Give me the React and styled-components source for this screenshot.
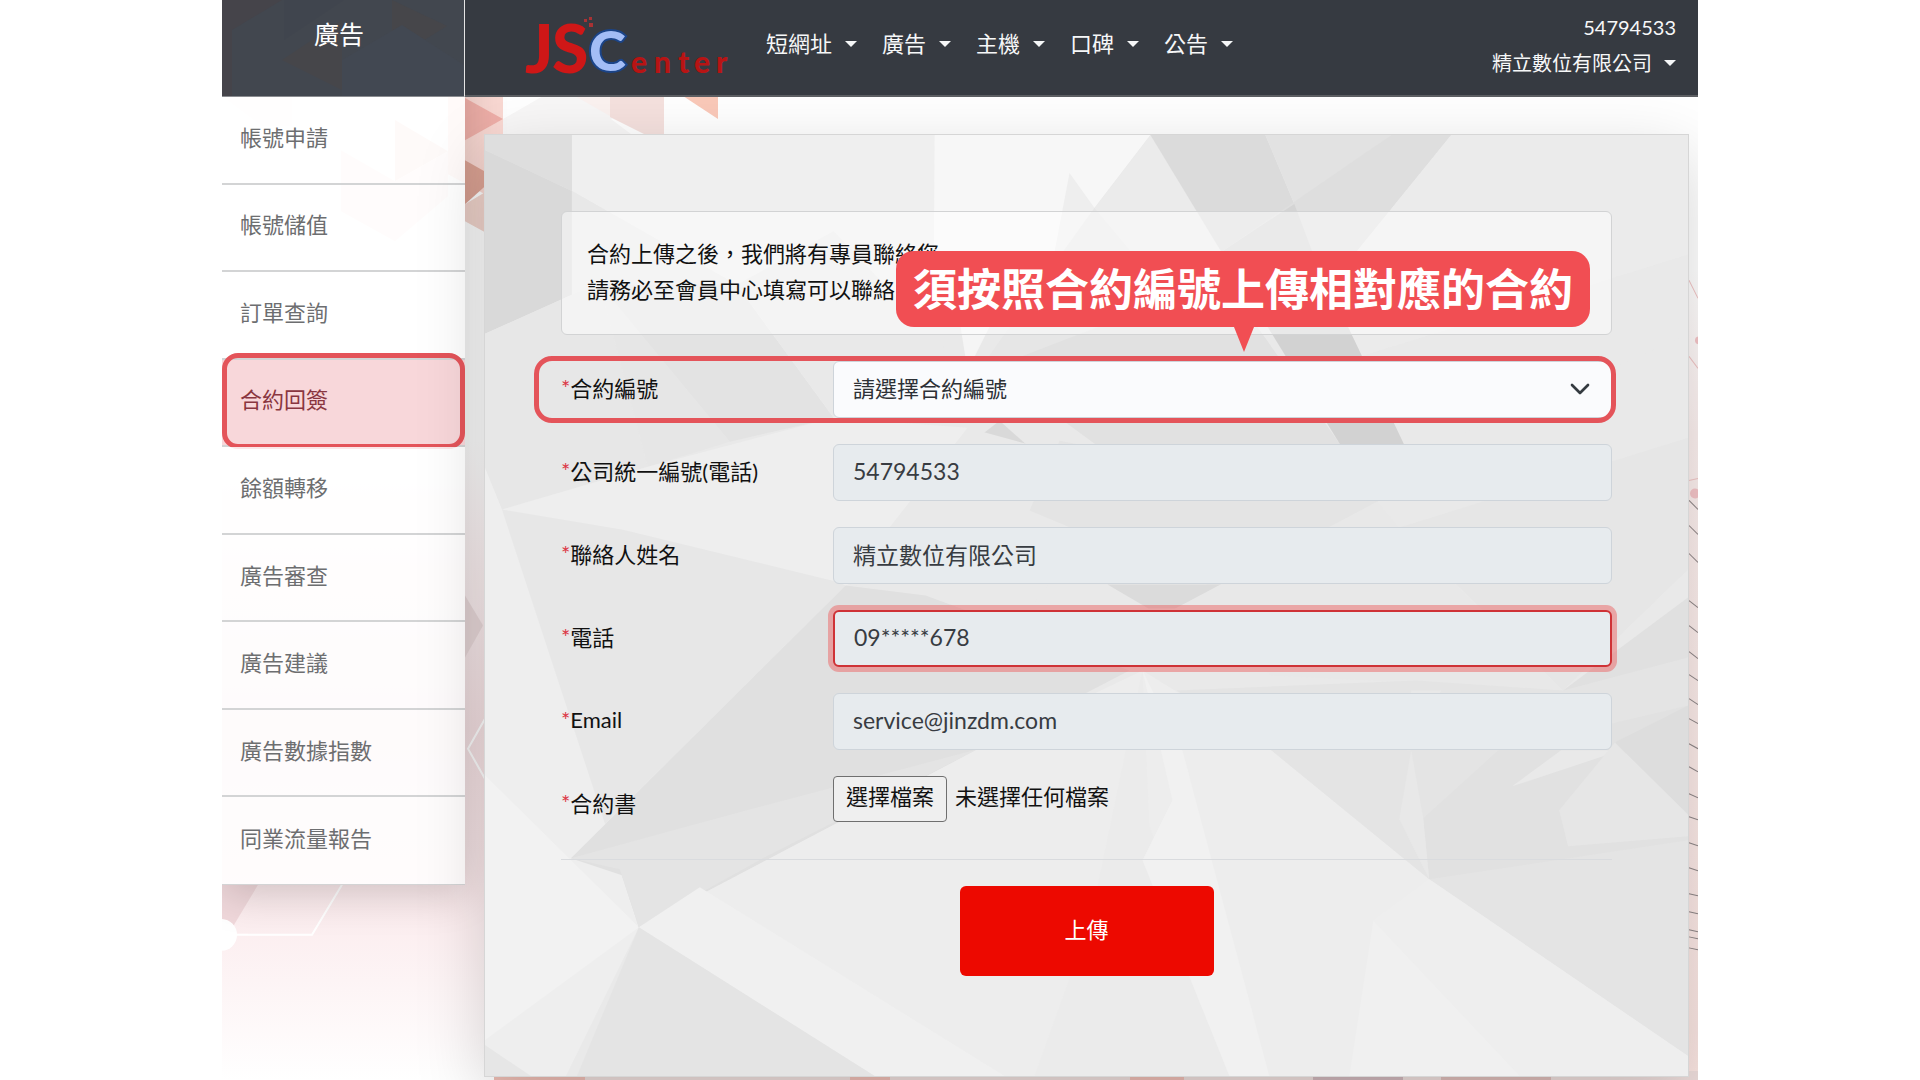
import { useRef, useState } from "react";
import styled, { createGlobalStyle } from "styled-components";
import { ChevronDown } from "lucide-react";

const sideMenu = [
  "帳號申請",
  "帳號儲值",
  "訂單查詢",
  "合約回簽",
  "餘額轉移",
  "廣告審查",
  "廣告建議",
  "廣告數據指數",
  "同業流量報告",
];

const topMenu = ["短網址", "廣告", "主機", "口碑", "公告"];

const fields = [
  { id: "taxId", label: "公司統一編號(電話)", value: "54794533" },
  { id: "contact", label: "聯絡人姓名", value: "精立數位有限公司" },
  { id: "phone", label: "電話", value: "09*****678", invalid: true },
  { id: "email", label: "Email", value: "service@jinzdm.com" },
];

// short strokes along the right edge of the backdrop: [y, drop]
const ticks = [
  [500, 9], [525, 9], [553, 9], [600, 7], [625, 7], [651, 7], [674, 6],
  [698, 6], [718, 5], [743, 5], [766, 5], [793, 4], [816, 3], [842, 3],
  [867, 3], [893, 2], [911, 2], [929, 2], [936, 2], [947, 2],
];

function Logo() {
  return (
    <LogoSvg viewBox="520 0 216 96" role="img" aria-label="JSCenter">
      <g fill="#cf1717" fontWeight="900">
        <text x="525" y="73" fontSize="66">J</text>
        <text x="552" y="73" fontSize="66">S</text>
        <text x="631 654 678 694 716" y="73" fontSize="30" fill="#b81414">
          enter
        </text>
      </g>
      <text
        x="589"
        y="71"
        fontSize="56"
        fontWeight="900"
        fill="#a3bdf6"
        stroke="#1b4488"
        strokeWidth="4"
        paintOrder="stroke"
      >
        C
      </text>
      <g fill="#a83234">
        <rect x="584" y="19" width="3" height="3" />
        <rect x="589" y="17" width="3" height="3" />
        <rect x="589" y="23" width="4" height="4" />
      </g>
    </LogoSvg>
  );
}

function Backdrop() {
  return (
    <Art viewBox="222 0 1476 1080" preserveAspectRatio="none" aria-hidden="true">
      <defs>
        <linearGradient id="blush" x1="0" y1="0" x2="0" y2="1">
          <stop offset="0" stopColor="#f6dde0" stopOpacity="0" />
          <stop offset="0.45" stopColor="#f5e1e3" />
          <stop offset="0.7" stopColor="#fbeaec" />
          <stop offset="1" stopColor="#ffffff" />
        </linearGradient>
        <linearGradient id="edge" x1="0" y1="0" x2="0" y2="1">
          <stop offset="0" stopColor="#fbefee" stopOpacity="0" />
          <stop offset="0.2" stopColor="#fbefee" />
          <stop offset="1" stopColor="#f9e4e0" />
        </linearGradient>
      </defs>
      <rect x="222" y="440" width="290" height="640" fill="url(#blush)" />
      <path d="M395 120l53 31-53 30z" fill="#f9d9d3" />
      <path d="M341 150l54 31 53-30v45l-53 45-54-30z" fill="#fceae6" />
      <path d="M222 96h70v30h-30z" fill="#fdf4f4" />
      <path d="M448 96h55v38h-18v60l-37-20z" fill="#fad9d3" />
      <path d="M465 98l38 21-38 21z" fill="#f0b0a9" />
      <path d="M465 160l30 17-30 27z" fill="#dfa596" />
      <path d="M465 204l20-12v40l-20-11z" fill="#f3d6ce" />
      <path d="M503 119l40-23h108l-40 23 20 15H503z" fill="#f8f7f7" />
      <path d="M610 96h54v38h-20l-34-17z" fill="#f5e1de" />
      <path d="M575 96h35v20z" fill="#fbf2f0" />
      <path d="M683 96h35v23z" fill="#fac9b9" />
      <path d="M465 595l18 30-18 32z" fill="#eadadb" />
      <path d="M222 884h36l-36 60z" fill="#f0d8db" />
      <path d="M236 934h76l30-50M485 718l-17 30 17 30" fill="none" stroke="#fff" strokeWidth="2" />
      <circle cx="221" cy="934" r="16" fill="#fff" />
      <path d="M1686 270h12v810h-12z" fill="url(#edge)" />
      <path d="M1689 280l9 18M1689 356l9 12M1689 480l9-2" stroke="#f0c5c5" fill="none" />
      <circle cx="1695" cy="493" r="5" fill="#f4c4c7" />
      <circle cx="1699" cy="340" r="4" fill="#f4c4c7" />
      <g stroke="#8d8586">
        {ticks.map(([y, drop]) => (
          <path key={y} d={`M1689 ${y}l9 ${drop}`} />
        ))}
      </g>
      <path d="M494 1070h1204v10H494z" fill="#ecdcda" />
      <path d="M494 1070h91v10h-91zM850 1070h40v10h-40zM1130 1070h54v10h-54z" fill="#ecbcb3" />
      <path d="M1313 1070h90v10h-90z" fill="#cfb6ba" />
      <path d="M1441 1070h110v10h-110z" fill="#dcbbb8" />
    </Art>
  );
}

function Facets() {
  return (
    <Art viewBox="485 134 1204 942" preserveAspectRatio="none" aria-hidden="true">
      <path d="M572 134h363l19 78-120 210-97-138-165-94z" fill="#efefef" />
      <path d="M485 134h87v56l-87-41z" fill="#dedede" />
      <path d="M485 149l87 41v104l-87 39z" fill="#d9d9d9" />
      <path d="M572 190l165 94-165 10z" fill="#e8e8e8" />
      <path d="M485 333l87-39 28-10 48 182-146 43-17-40z" fill="#e7e7e7" />
      <path d="M600 284l137 0 97 133-104 24z" fill="#e3e3e3" />
      <path d="M600 284l130 157-82 25z" fill="#e6e6e6" />
      <path d="M737 284l97-54 121 128-121 59z" fill="#e9e9e9" />
      <path d="M935 134h216l-56 73-50 60-4 60-107-30z" fill="#f7f7f7" />
      <path d="M960 320l38-10-30 60z" fill="#f5f5f5" />
      <path d="M1070 172l25 35-43 60z" fill="#eeeeee" />
      <path d="M1095 207l56-73 71 117-90 30z" fill="#ebebeb" />
      <path d="M1095 207l75 90-160 65-24-2z" fill="#e6e6e6" />
      <path d="M1151 134h115l29 69-73 48z" fill="#dbdbdb" />
      <path d="M1266 134h126l-97 69z" fill="#e2e2e2" />
      <path d="M1392 134h60l-95 117-135 0z" fill="#dedede" />
      <path d="M1295 203l18 48-91 0z" fill="#d4d4d4" />
      <path d="M1452 134h237v120l-328 102-24-28 20-77z" fill="#ebebeb" />
      <path d="M1361 356l328-102v80l-250 110h-34z" fill="#e9e9e9" />
      <path d="M1222 251l36 75 83 118 37 57-150 40-190-140-30-40 130-50z" fill="#e1e1e1" />
      <path d="M1222 251h91l92 193-27 57-37-57z" fill="#d2d2d2" />
      <path d="M1000 420l-32 25h60z" fill="#d9d9d9" />
      <path d="M502 509l146-43 186-49 134 10-68 133-54 25z" fill="#eeeeee" />
      <path d="M502 509l120 20 214 52 10 4-276 273z" fill="#e7e7e7" />
      <path d="M968 427l-122 156 180 30 110-140z" fill="#e9e9e9" />
      <path d="M1060 440l-30 70 240 100 108-109z" fill="#e4e4e4" />
      <path d="M1108 584h90l131 0-80 24-100 0z" fill="#dbdbdb" />
      <path d="M1378 501l22 26 56 57 108 106-292-15-100-65z" fill="#e8e8e8" />
      <path d="M1400 527l289-90v132l-125 121z" fill="#e6e6e6" />
      <path d="M1564 690l125-93v60l-100 60z" fill="#e0e0e0" />
      <path d="M485 467l17 42 137 418-73 149h-81z" fill="#eeeeee" />
      <path d="M485 775l154 152-154 113z" fill="#f2f2f2" />
      <path d="M485 1045l46 31h-46z" fill="#e6e6e6" />
      <path d="M571 858l275-273 80 10 204 75-152 79-339 178-17-52z" fill="#e0e0e0" />
      <path d="M571 858l176-48 231-61-215 109-124 69-19-58z" fill="#e4e4e4" />
      <path d="M639 927l339-178 165-79 129 80 158 129 259 177v20H875z" fill="#ededed" />
      <path d="M639 927l61-40 305 189H875z" fill="#f0f0f0" />
      <path d="M639 927l236 149H577z" fill="#e4e4e4" />
      <path d="M1143 670l-52 250-56 156h205l-90-250z" fill="#ebebeb" />
      <path d="M1143 670l40 80 87 326h-40l-87-216 30-60z" fill="#f1f1f1" />
      <path d="M1272 750l-95-60 240-10 147 10 125-33v399l-259-177z" fill="#e4e4e4" />
      <path d="M1424 818l75-68 190-45v135l-259 39z" fill="#e1e1e1" />
      <path d="M1412 750l-4 0 4-60h30l-30 60 12 68 6 61-30-60z" fill="#e8e8e8" />
      <path d="M1513 786l49-36h60z" fill="#e9e9e9" />
      <path d="M1560 810l56-68 73 72v22l-120 10z" fill="#e6e6e6" />
      <path d="M1616 742l73-37v109z" fill="#dddddd" />
      <path d="M1374 920l147 156h-171z" fill="#f0f0f0" />
      <path d="M1374 920l56-41 259 177v20h-168z" fill="#eeeeee" />
    </Art>
  );
}

function App() {
  const [fileName, setFileName] = useState("");
  const fileRef = useRef(null);

  return (
    <Page lang="zh-Hant">
      <GlobalStyle />
      <Backdrop />
      <Sidebar>
        <SideTitle>
          <Art viewBox="0 0 242 96" preserveAspectRatio="none" aria-hidden="true">
            <path d="M0 0h60l-50 30v66H0z" fill="#45444a" />
            <path d="M60 60l60-40v70zM170 0l55 26-55 34z" fill="#46464a" />
            <path d="M62 0h60l-60 40z" fill="#40454e" />
            <path d="M120 96V60l60-35 62 40v31z" fill="#424852" />
          </Art>
          <h1>廣告</h1>
        </SideTitle>
        <SideNav>
          {sideMenu.map((name) => (
            <SideLink key={name} href="#" $active={name === "合約回簽"}>
              {name}
            </SideLink>
          ))}
        </SideNav>
      </Sidebar>
      <Content>
        <Header>
          <Logo />
          <TopNav>
            {topMenu.map((name) => (
              <MenuButton key={name} type="button">
                {name}
                <Caret />
              </MenuButton>
            ))}
          </TopNav>
          <Account>
            <span>54794533</span>
            <MenuButton type="button" $small>
              精立數位有限公司
              <Caret />
            </MenuButton>
          </Account>
        </Header>
        <Main>
          <Panel>
            <Facets />
            <Form onSubmit={(e) => e.preventDefault()}>
              <Notice>
                <p>合約上傳之後，我們將有專員聯絡您。</p>
                <p>請務必至會員中心填寫可以聯絡</p>
                <Callout>須按照合約編號上傳相對應的合約</Callout>
              </Notice>
              <Row $marked>
                <Label htmlFor="contract">合約編號</Label>
                <SelectBox>
                  <Select id="contract" defaultValue="">
                    <option value="">請選擇合約編號</option>
                  </Select>
                  <ChevronDown size={32} strokeWidth={2} />
                </SelectBox>
              </Row>
              {fields.map((field) => (
                <Row key={field.id}>
                  <Label htmlFor={field.id}>{field.label}</Label>
                  <Input
                    id={field.id}
                    defaultValue={field.value}
                    readOnly
                    $invalid={field.invalid}
                  />
                </Row>
              ))}
              <Row>
                <Label htmlFor="file">合約書</Label>
                <FileBox>
                  <HiddenFile
                    id="file"
                    type="file"
                    ref={fileRef}
                    onChange={(e) => setFileName(e.target.files[0]?.name || "")}
                  />
                  <FileButton type="button" onClick={() => fileRef.current.click()}>
                    選擇檔案
                  </FileButton>
                  <span>{fileName || "未選擇任何檔案"}</span>
                </FileBox>
              </Row>
              <Divider />
              <Submit type="submit">上傳</Submit>
            </Form>
          </Panel>
        </Main>
      </Content>
    </Page>
  );
}

const GlobalStyle = createGlobalStyle`
  * {
    box-sizing: border-box;
  }
  body {
    margin: 0;
    background: #fff;
    font-family: Lato, "Noto Sans CJK TC", sans-serif;
    font-size: 22px;
    color: #111;
  }
  h1, p {
    margin: 0;
  }
  button, input, select {
    font: inherit;
    color: inherit;
  }
`;
const Page = styled.div`
  position: relative;
  display: flex;
  align-items: flex-start;
  max-width: 1476px;
  min-height: 100vh;
  margin: 0 auto;
  overflow: hidden;
`;
const Art = styled.svg`
  position: absolute;
  inset: 0;
  width: 100%;
  height: 100%;
`;
const Sidebar = styled.aside`
  position: relative;
  flex: 0 0 243px;
  box-shadow: 0 8px 40px rgba(0, 0, 0, 0.18);
`;
const SideTitle = styled.div`
  position: relative;
  height: 97px;
  padding: 16px 8px 0 0;
  background: #42474f;
  border-right: 1px solid #e4e4e4;
  border-bottom: 1px solid #8a8c90;
  text-align: center;
  h1 {
    position: relative;
    font-size: 25px;
    line-height: 36px;
    font-weight: 400;
    color: #fff;
  }
`;
const SideNav = styled.nav`
  display: grid;
  grid-auto-rows: 1fr;
  min-height: 788px;
`;
const SideLink = styled.a`
  position: relative;
  display: flex;
  align-items: center;
  padding: 0 18px 8px;
  border-bottom: 2px solid #d3d4d5;
  background: ${(props) => (props.$active ? "#f8d7da" : "rgba(255, 255, 255, 0.86)")};
  color: ${(props) => (props.$active ? "#8a3640" : "#6d6e70")};
  text-decoration: none;
  &:last-child {
    border-bottom-width: 1px;
  }
  &::after {
    content: "";
    display: ${(props) => (props.$active ? "block" : "none")};
    position: absolute;
    inset: -7px 0 -4px;
    border: 5px solid #e4545a;
    border-radius: 16px;
  }
`;
const Content = styled.div`
  position: relative;
  flex: 1;
  min-width: 0;
`;
const Header = styled.header`
  position: relative;
  z-index: 1;
  display: flex;
  align-items: flex-start;
  height: 97px;
  padding: 0 22px 0 55px;
  background: #363a41;
  border-bottom: 2px solid #5c5e62;
`;
const LogoSvg = styled.svg`
  width: 216px;
  height: 96px;
  font-family: Lato, sans-serif;
`;
const TopNav = styled.nav`
  display: flex;
  gap: 25px;
  padding: 26px 0 0 30px;
`;
const MenuButton = styled.button`
  display: flex;
  align-items: center;
  gap: ${(props) => (props.$small ? "12px" : "13px")};
  padding: 0;
  border: none;
  background: none;
  color: #f6f7f8;
  font-size: ${(props) => (props.$small ? "20px" : "22px")};
  line-height: 36px;
`;
const Caret = styled.span`
  border: 6px solid transparent;
  border-top-color: currentColor;
  border-bottom: none;
`;
const Account = styled.div`
  display: flex;
  flex-direction: column;
  align-items: flex-end;
  margin-left: auto;
  padding-top: 10px;
  color: #f6f7f8;
  font-size: 20px;
  line-height: 35px;
`;
const Main = styled.main`
  padding: 37px 9px 4px 19px;
`;
const Panel = styled.section`
  position: relative;
  background: #e9e9e9;
  border: 1px solid #d6d6d6;
  box-shadow: 0 20px 64px rgba(0, 0, 0, 0.17);
`;
const Form = styled.form`
  position: relative;
  display: flex;
  flex-direction: column;
  gap: 26px;
  padding: 76px 76px 100px;
`;
const Notice = styled.div`
  position: relative;
  padding: 24px 25px 26px;
  border: 1px solid #d2d3d4;
  border-radius: 6px;
  background: rgba(255, 255, 255, 0.5);
  line-height: 36px;
`;
const Callout = styled.strong`
  position: absolute;
  top: 39px;
  right: 21px;
  z-index: 1;
  padding: 0 17px;
  border-radius: 18px;
  background: #f14e53;
  color: #fff;
  font-size: 44px;
  line-height: 76px;
  white-space: nowrap;
  &::after {
    content: "";
    position: absolute;
    top: 100%;
    left: 50%;
    margin-left: -9px;
    border: 10px solid transparent;
    border-top: 25px solid #f14e53;
    border-bottom: none;
  }
`;
const Row = styled.div`
  position: relative;
  display: grid;
  grid-template-columns: 272px 1fr;
  min-height: 57px;
  &::after {
    content: "";
    display: ${(props) => (props.$marked ? "block" : "none")};
    position: absolute;
    inset: -5px -4px -5px -27px;
    border: 5px solid #e4545a;
    border-radius: 18px;
    pointer-events: none;
  }
`;
const Label = styled.label`
  display: flex;
  align-items: center;
  padding-bottom: 5px;
  &::before {
    content: "*";
    color: #dc3545;
  }
`;
const SelectBox = styled.div`
  position: relative;
  display: flex;
  svg {
    position: absolute;
    top: 12px;
    right: 16px;
    color: #343a40;
    pointer-events: none;
  }
`;
const Select = styled.select`
  width: 100%;
  padding: 0 19px 3px;
  appearance: none;
  border: 1px solid #ced4da;
  border-radius: 6px;
  background: #fafbfd;
  color: #2d3136;
`;
const Input = styled.input`
  min-width: 0;
  padding: 0 19px 3px;
  border: ${(props) => (props.$invalid ? "2px solid #cf3236" : "1px solid #ced4da")};
  border-radius: 6px;
  background: #e7ebee;
  box-shadow: ${(props) => (props.$invalid ? "0 0 0 5px rgba(235, 100, 100, 0.5)" : "none")};
  color: #383c42;
  font-size: 23px;
  outline: none;
`;
const FileBox = styled.div`
  display: flex;
  align-items: flex-start;
  gap: 8px;
  line-height: 42px;
`;
const HiddenFile = styled.input`
  position: absolute;
  width: 1px;
  height: 1px;
  opacity: 0;
`;
const FileButton = styled.button`
  height: 46px;
  padding: 0 12px 4px;
  border: 1px solid #6f6f6f;
  border-radius: 4px;
  background: #efefef;
  line-height: 36px;
`;
const Divider = styled.hr`
  width: 100%;
  margin: 0;
  border: none;
  border-top: 1px solid #d9dbde;
`;
const Submit = styled.button`
  align-self: center;
  width: 254px;
  height: 90px;
  padding: 0 0 6px;
  border: none;
  border-radius: 6px;
  background: #ed0900;
  color: #fff;
`;

export default App;
